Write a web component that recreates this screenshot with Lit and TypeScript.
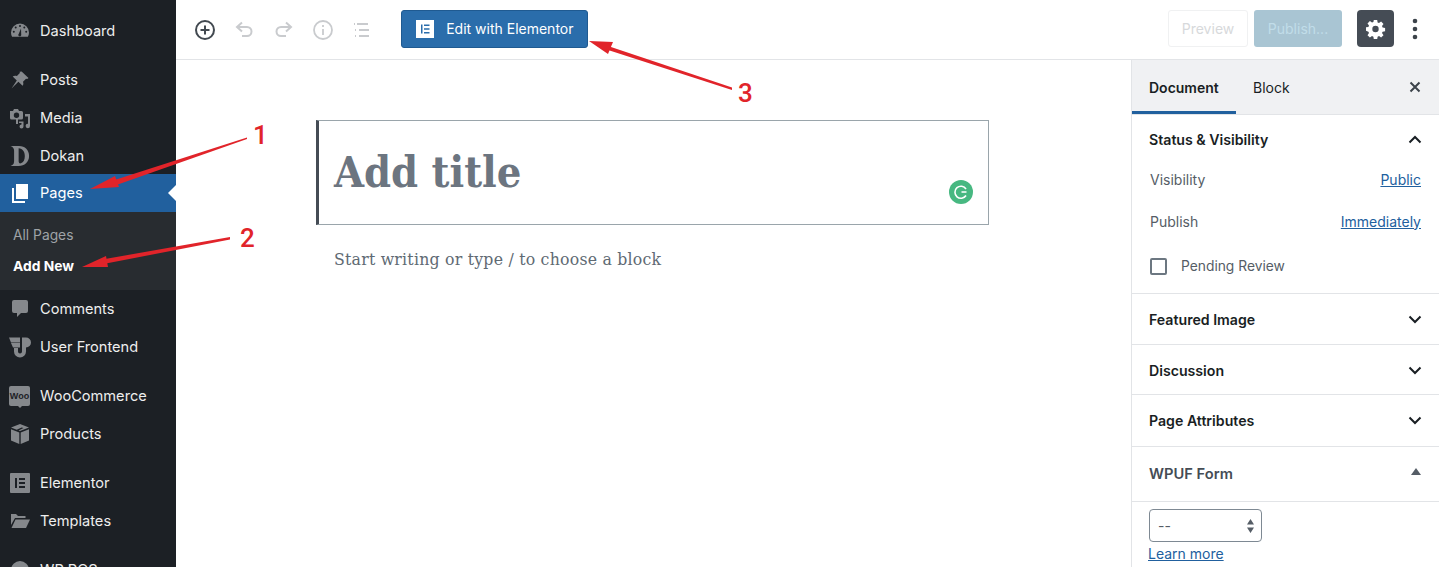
import { LitElement, html, css, svg } from "lit";
import { customElement } from "lit/decorators.js";

const ic = (body: unknown, vb = "0 0 20 20", cls = "mi") => html`<svg class=${cls} viewBox=${vb} fill="currentColor">${body}</svg>`;

const menuIcons: Record<string, unknown> = {
  gauge: ic(svg`<path fill-rule="evenodd" d="M10 2.500a9 9 0 0 1 9 9c0 1.600-.4 3-1.100 4.200H2.100A8.600 8.600 0 0 1 1 11.500a9 9 0 0 1 9-9zM10 4a1 1 0 1 0 0 2 1 1 0 0 0 0-2zM5.700 5.600a1 1 0 1 0 0 2 1 1 0 0 0 0-2zM14.300 5.600a1 1 0 1 0 0 2 1 1 0 0 0 0-2zM3.800 9.800a1 1 0 1 0 0 2 1 1 0 0 0 0-2zM16.200 9.800a1 1 0 1 0 0 2 1 1 0 0 0 0-2zM11 7.500l-2.200 5.200a1.500 1.500 0 1 0 2.400.6z"/>`),
  pin: ic(svg`<path d="M11.600 1.500l6.900 6.400-1.300 1.100-1.200-.3-3 3c.6 1.600.4 3-.4 4.100L8.400 11.800 1.500 18.500l5.300-8-4.100-4c1.200-.9 2.600-1.100 4.200-.5l3-3-.3-1.200z"/>`),
  media: ic(svg`<path fill-rule="evenodd" d="M0 3h3l1-2h4l1 2h2.500A1.500 1.500 0 0 1 13 4.500V10a1.500 1.500 0 0 1-1.500 1.500H8V16H6v-4.500H1.500A1.500 1.500 0 0 1 0 10zM6.500 4.500a2.700 2.700 0 1 0 0 5.400 2.700 2.700 0 0 0 0-5.400z"/><path d="M15 6h5v12a2.200 2.200 0 1 1-2-2.200V8.500h-3zM9 13.500h4.500v5a2 2 0 1 1-2-2V15H9z"/>`),
  dokan: ic(svg`<path fill-rule="evenodd" d="M0 0h9.500C16 0 20.500 4.500 20.500 11S15.500 22 9 22H0c3.500-1 4-3 4-6V5C4 3 3 1 0 0zM9 2.500v14c0 2 1 3 2.500 2.500 3-.8 4.300-4 4.300-8 0-4.500-2.300-8-6.800-8.500z"/>`, "0 0 21 22"),
  pages: ic(svg`<path d="M6 1h12v15H6z"/><path d="M2 5h2v13h11v2H2z"/>`),
  comment: ic(svg`<path d="M4 1h12a2 2 0 0 1 2 2v9a2 2 0 0 1-2 2h-5l-4 4v-4H4a2 2 0 0 1-2-2V3a2 2 0 0 1 2-2z"/>`),
  wpuf: ic(svg`<path d="M-1 .5h11v5H1zM1 6h9v4.500H3zM12 .5h4a5 5 0 0 1 0 10v4a6 6 0 0 1-12 0V11h4v3.500a2 2 0 0 0 4 0z"/>`),
  woo: html`<span class="woo"><span class="woo-t">Woo</span></span>`,
  box: ic(svg`<path d="M10 0l9 3.500-9 3.500-1.500-.6 5-2.300-1.800-.7-5 2.300L1 3.500z"/><path d="M1 5.300l8.300 3.200V20L1 16.500zM19 5.300v11.200L10.700 20V8.500z"/>`),
  el: ic(svg`<path fill-rule="evenodd" d="M1 0h18a1 1 0 0 1 1 1v18a1 1 0 0 1-1 1H1a1 1 0 0 1-1-1V1a1 1 0 0 1 1-1zM5 5v10h2V5zM9 5v2h6V5zM9 9v2h6V9zM9 13v2h6v-2z"/>`),
  folder: ic(svg`<path d="M1 3h5l2 2h7.500v2H5L1 14z"/><path d="M5.500 8.500H20L16 17H1.500z"/>`),
  pos: ic(svg`<circle cx="10" cy="10" r="9"/>`),
};

const gap = "gap";
const topMenu = [
  { t: "Dashboard", i: "gauge" }, gap,
  { t: "Posts", i: "pin" }, { t: "Media", i: "media" }, { t: "Dokan", i: "dokan" },
  { t: "Pages", i: "pages", cur: true }, "sub",
  { t: "Comments", i: "comment" }, { t: "User Frontend", i: "wpuf" }, gap,
  { t: "WooCommerce", i: "woo" }, { t: "Products", i: "box" }, gap,
  { t: "Elementor", i: "el" }, { t: "Templates", i: "folder" }, gap,
  { t: "WP POS", i: "pos" },
];

const chevUp = html`<svg class="chev" viewBox="0 0 14 9" fill="none" stroke="currentColor" stroke-width="2"><path d="M1.500 7.500L7 2l5.500 5.500"/></svg>`;
const chevDown = html`<svg class="chev" viewBox="0 0 14 9" fill="none" stroke="currentColor" stroke-width="2"><path d="M1.500 1.500L7 7l5.500-5.500"/></svg>`;

@customElement("app-root")
export class AppRoot extends LitElement {
  static styles = css`
    :host { display: block; width: 1439px; height: 567px; overflow: hidden; position: relative; background: #fff; font-family: Inter, "Liberation Sans", sans-serif; font-size: 14px; color: #191e23; }
    * { box-sizing: border-box; }
    .app { display: flex; height: 567px; }
    .side { width: 176px; flex: none; background: #1c2025; padding-top: 12.300px; overflow: hidden; color: #eee; font-size: 14.600px; }
    .item { height: 37.600px; display: flex; align-items: center; gap: 10px; padding-left: 10px; position: relative; }
    .item.cur { background: #21609e; color: #fff; }
    .item.cur::after { content: ""; position: absolute; right: 0; top: 50%; margin-top: -8px; border: 8px solid transparent; border-right-color: #fff; border-left: 0; }
    .mi { width: 20px; height: 20px; flex: none; color: #85888c; display: block; overflow: visible; }
    .cur .mi { color: #fff; }
    .sp { height: 11.800px; }
    .sub { height: 78.200px; background: #282c30; padding: 8px 13px 0; display: flex; flex-direction: column; }
    .sub div { height: 31px; line-height: 31px; font-size: 13.800px; color: #9fa3a7; }
    .sub div.on { color: #fff; font-weight: 700; }
    .woo { width: 21px; height: 20px; flex: none; background: #85888c; border-radius: 2px; display: flex; align-items: center; justify-content: center; margin-left: -1px; position: relative; }
    .woo::after { content: ""; position: absolute; left: 9px; bottom: -2px; border: 2px solid transparent; border-top-color: #85888c; border-bottom: 0; }
    .woo-t { font: 700 9px "Liberation Sans", sans-serif; color: #1c2025; }
    .main { flex: 1; display: flex; flex-direction: column; min-width: 0; }
    .bar { height: 60px; border-bottom: 1px solid #e2e4e7; display: flex; align-items: center; padding-left: 18px; flex: none; }
    .tools { display: flex; align-items: center; gap: 17.300px; color: #c9cbce; margin-right: 28px; }
    .tools svg { display: block; width: 22px; height: 22px; }
    .tools svg.add { color: #424950; }
    .eb { width: 187px; height: 38px; margin-top: -2px; background: #2a6dab; border: 1px solid #1f5a91; border-radius: 3px; color: #fff; display: flex; align-items: center; padding-left: 14px; gap: 12px; font-size: 14px; }
    .eb i { width: 18px; height: 18px; background: #fff; display: block; }
    .eb i svg { display: block; width: 18px; height: 18px; color: #2a6dab; }
    .right { margin-left: auto; display: flex; align-items: center; margin-top: -2px; }
    .prev { width: 80px; height: 37px; border: 1px solid #f0f1f2; border-radius: 3px; color: #d7d9db; display: flex; align-items: center; justify-content: center; }
    .pub { width: 88px; height: 37px; margin-left: 6px; background: #a9c5d3; color: #c1dde9; border-radius: 3px; display: flex; align-items: center; justify-content: center; }
    .gear { width: 37px; height: 37px; margin-left: 15px; background: #454c55; border-radius: 4px; display: flex; align-items: center; justify-content: center; color: #fff; }
    .gear svg { width: 20px; height: 20px; display: block; }
    .dots { width: 41px; display: flex; justify-content: center; color: #3c434a; }
    .dots svg { width: 6px; height: 22px; display: block; }
    .rest { width: 4px; }
    .body { flex: 1; display: flex; min-height: 0; }
    .editor { flex: 1; padding: 60px 0 0 140px; }
    .title { position: relative; width: 673px; height: 105px; border: 1px solid #9aa5ab; border-left: 3px solid #454c55; padding: 25px 0 0 15px; font: 700 43px/52px "DejaVu Serif Condensed", "DejaVu Serif", serif; color: #6c7580; }
    .gram { position: absolute; right: 15px; top: 59px; width: 24px; height: 24px; }
    .gram svg { width: 24px; height: 24px; display: block; }
    .para { padding: 21px 0 0 18px; font: 17.500px/26px "DejaVu Serif Condensed", "DejaVu Serif", serif; letter-spacing: .22px; color: #606a73; }
    .panel { width: 308px; flex: none; border-left: 1px solid #e2e4e7; }
    .tabs { height: 55px; background: #f0f1f3; border-bottom: 1px solid #e2e4e7; display: flex; align-items: center; position: relative; color: #191e23; }
    .tab { height: 54px; display: flex; align-items: center; padding: 0 17px; }
    .tab.on { font-weight: 600; width: 104px; border-bottom: 3px solid #21609e; padding-top: 3px; }
    .x { margin-left: auto; margin-right: 18px; display: block; width: 12px; height: 12px; color: #3c434a; }
    .sec { border-bottom: 1px solid #e2e4e7; padding: 0 17px; }
    .sec.status { height: 179px; }
    .sh { display: flex; align-items: center; justify-content: space-between; font-weight: 600; font-size: 14.150px; }
    .h50 { height: 50px; padding-bottom: 2px; }
    .h51 { height: 50px; }
    .h49 { height: 49px; padding-top: 2px; }
    .hp { height: 51px; }
    .hw { height: 54px; }
    .chev { width: 14px; height: 9px; display: block; color: #191e23; }
    .row { display: flex; justify-content: space-between; height: 42px; align-items: center; color: #555d66; padding: 0 1px 0 1px; }
    .row.first { margin-top: -7px; }
    .row a { color: #21609e; text-decoration: underline; }
    .chk { display: flex; align-items: center; gap: 14px; height: 44px; margin-top: 2px; color: #555d66; padding-left: 1px; font-size: 13.800px; }
    .chk i { width: 17px; height: 17px; border: 2px solid #6c7781; border-radius: 2px; display: block; }
    .wp { color: #454c55; font-size: 14.700px; }
    .tri { width: 0; height: 0; border: 5.500px solid transparent; border-top: 0; border-bottom: 7px solid #555d66; margin-right: 1px; margin-top: -6px; }
    .sel { width: 113px; height: 33px; margin: 7px 0 0 17px; border: 1px solid #7e8993; border-radius: 4px; display: flex; align-items: center; justify-content: space-between; padding: 0 7px 0 8px; color: #555d66; }
    .sel svg { width: 7px; height: 14px; display: block; color: #555d66; }
    .lm { margin: 3px 0 0 16px; color: #21609e; text-decoration: underline; display: block; }
    .anno { position: absolute; left: 0; top: 0; width: 1439px; height: 567px; pointer-events: none; }
    .num { position: absolute; font: 500 26px/30px Roboto, "Liberation Sans", sans-serif; color: #e1242a; }
    .n1 { left: 253px; top: 120px; }
    .n2 { left: 240px; top: 223px; }
    .n3 { left: 738px; top: 78px; }
  `;

  private item(e: any) {
    if (e === "gap") return html`<div class="sp"></div>`;
    if (e === "sub") return html`<div class="sub"><div>All Pages</div><div class="on">Add New</div></div>`;
    return html`<div class="item ${e.cur ? "cur" : ""}">${menuIcons[e.i]}<span>${e.t}</span></div>`;
  }

  render() {
    return html`
      <div class="app">
        <nav class="side">${topMenu.map((e) => this.item(e))}</nav>
        <div class="main">
          <header class="bar">
            <div class="tools">
              <svg class="add" viewBox="0 0 22 22" fill="none" stroke="currentColor" stroke-width="2"><circle cx="11" cy="11" r="9"/><path d="M11 6.500v9M6.500 11h9"/></svg>
              <svg viewBox="0 0 22 22" fill="none" stroke="currentColor" stroke-width="2"><path d="M4 8h10a4.500 4.500 0 0 1 0 9h-5"/><path d="M9 3.500L4 8l5 4.500"/></svg>
              <svg viewBox="0 0 22 22" fill="none" stroke="currentColor" stroke-width="2"><path d="M18 8H8a4.500 4.500 0 0 0 0 9h5"/><path d="M13 3.500L18 8l-5 4.500"/></svg>
              <svg viewBox="0 0 22 22" fill="none" stroke="currentColor" stroke-width="1.800"><circle cx="11" cy="11" r="9"/><path d="M11 10v6"/><path d="M11 6v2"/></svg>
              <svg viewBox="0 0 22 22" fill="none" stroke="currentColor" stroke-width="2"><path d="M6 5h11M8 11h10M8 17h10"/><path d="M3 5h1M4 11h1M4 17h1"/></svg>
            </div>
            <div class="eb"><i><svg viewBox="0 0 18 18" fill="currentColor"><path d="M5 4.500h1.500v9H5zM8 4.500h5.500V6H8zM8 8.200h5.500v1.500H8zM8 12h5.500v1.500H8z"/></svg></i><span>Edit with Elementor</span></div>
            <div class="right">
              <div class="prev">Preview</div>
              <div class="pub">Publish...</div>
              <div class="gear"><svg viewBox="0.5 0 20 20" fill="currentColor"><path fill-rule="evenodd" d="M8.300 1h3.400l.4 2.500 1.400.6 2.100-1.500 2.400 2.400-1.500 2.100.6 1.400 2.500.4v3.400l-2.500.4-.6 1.400 1.500 2.100-2.400 2.400-2.100-1.500-1.400.6-.4 2.500H8.300l-.4-2.500-1.400-.6-2.100 1.500-2.400-2.400 1.500-2.100-.6-1.400L.4 11.700V8.300l2.500-.4.6-1.400L2 4.400 4.400 2l2.100 1.500 1.400-.6zM10 6.800a3.200 3.200 0 1 0 0 6.400 3.200 3.200 0 0 0 0-6.400z"/></svg></div>
              <div class="dots"><svg viewBox="0 0 6 22" fill="currentColor"><circle cx="3" cy="3" r="2.300"/><circle cx="3" cy="11" r="2.300"/><circle cx="3" cy="19" r="2.300"/></svg></div>
              <div class="rest"></div>
            </div>
          </header>
          <div class="body">
            <div class="editor">
              <div class="title">Add title
                <span class="gram"><svg viewBox="0 0 24 24"><circle cx="12" cy="12" r="12" fill="#47b881"/><path d="M17 9a6 6 0 1 0 0 6.500M17.500 12h-5" fill="none" stroke="#fff" stroke-width="1.600"/></svg></span>
              </div>
              <div class="para">Start writing or type / to choose a block</div>
            </div>
            <aside class="panel">
              <div class="tabs">
                <div class="tab on">Document</div>
                <div class="tab">Block</div>
                <svg class="x" viewBox="0 0 12 12" fill="none" stroke="currentColor" stroke-width="2"><path d="M1.500 1.500l9 9M10.500 1.500l-9 9"/></svg>
              </div>
              <section class="sec status">
                <div class="sh h50">Status &amp; Visibility ${chevUp}</div>
                <div class="row first"><span>Visibility</span><a>Public</a></div>
                <div class="row"><span>Publish</span><a>Immediately</a></div>
                <div class="chk"><i></i><span>Pending Review</span></div>
              </section>
              <section class="sec"><div class="sh h51">Featured Image ${chevDown}</div></section>
              <section class="sec"><div class="sh h49">Discussion ${chevDown}</div></section>
              <section class="sec"><div class="sh hp">Page Attributes ${chevDown}</div></section>
              <section class="sec"><div class="sh wp hw">WPUF Form <span class="tri"></span></div></section>
              <div class="sel"><span>--</span><svg viewBox="0 0 7 14" fill="currentColor"><path d="M3.500 0L7 5.500H0zM3.500 14L0 8.500h7z"/></svg></div>
              <a class="lm">Learn more</a>
            </aside>
          </div>
        </div>
      </div>
      <svg class="anno" viewBox="0 0 1439 567" fill="#e1242a">
        <path d="M247 137.500L113 180.500l2 5 132-46.500z"/><path d="M90 189l25-13 4 11z"/>
        <path d="M230 237L105 259l1 4.500 124-24z"/><path d="M82 267l24-11 2 11z"/>
        <path d="M732 87.500L608 46l-1.500 3.500L732 90z"/><path d="M589 41l24 1-5 12z"/>
      </svg>
      <span class="num n1">1</span><span class="num n2">2</span><span class="num n3">3</span>
    `;
  }
}
